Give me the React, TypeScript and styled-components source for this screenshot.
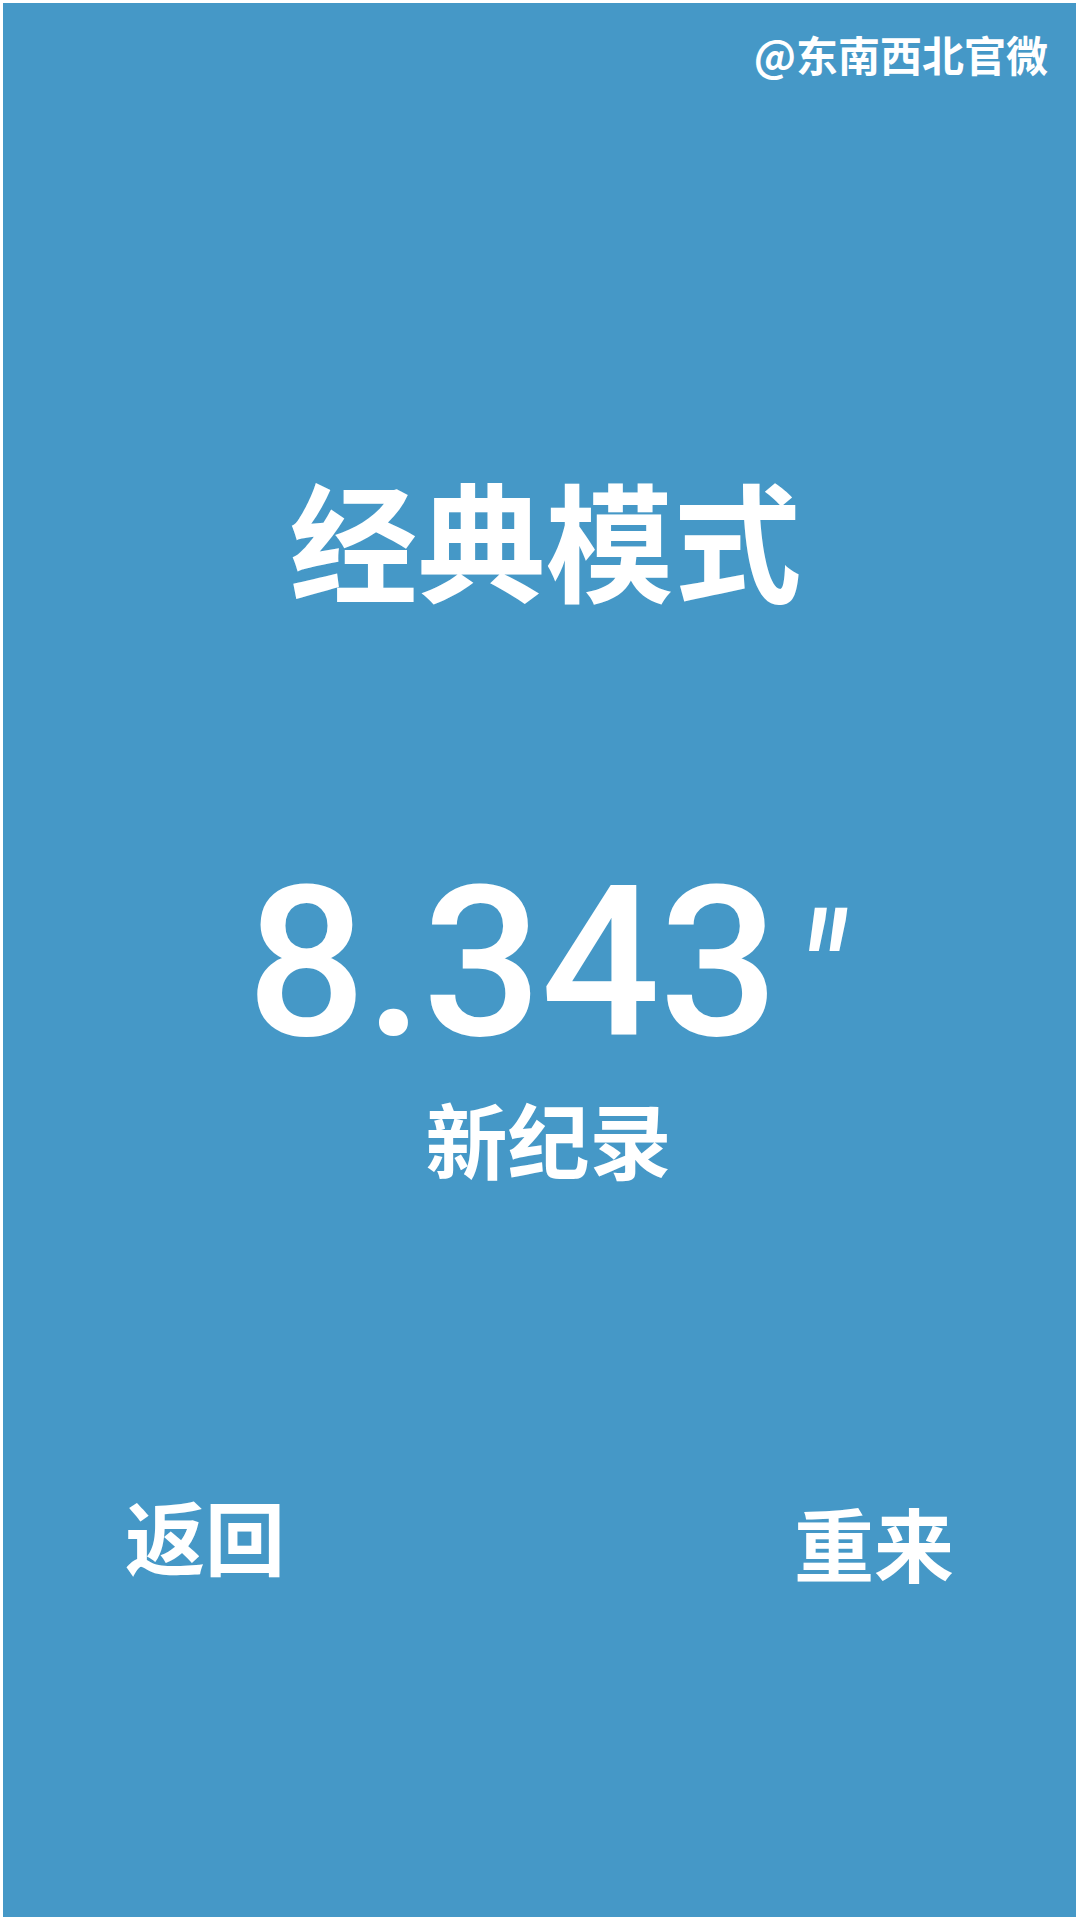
import React from "react";
import styled, { createGlobalStyle } from "styled-components";

const Global = createGlobalStyle`
  html, body { margin: 0; padding: 0; background: #ffffff; }
  body { font-family: "Noto Sans CJK SC", "Noto Sans", sans-serif; }
`;

const Panel = styled.div`
  margin: 3px 4px 3px 3px;
  height: 1914px;
  background: #4598c7;
  display: flex;
  flex-direction: column;
  align-items: center;
  color: #ffffff;
  box-sizing: border-box;
  overflow: hidden;
`;

const cjk = `"Noto Sans CJK SC", "Noto Sans", sans-serif`;

const Watermark = styled.div`
  align-self: flex-end;
  margin: 30px 28px 0 0;
  font-family: ${cjk};
  font-weight: 700;
  font-size: 42px;
  line-height: 1;
`;

const Title = styled.h1`
  margin: 399px 0 0 12px;
  font-family: ${cjk};
  font-weight: 700;
  font-size: 128px;
  line-height: 1;
`;

const ScoreRow = styled.div`
  margin-top: 256px;
  margin-left: 14px;
  display: flex;
  align-items: flex-start;
`;

const Score = styled.span`
  font-family: Roboto, "Liberation Sans", sans-serif;
  font-weight: 500;
  font-size: 210px;
  line-height: 1;
  letter-spacing: -1px;
`;

const Seconds = styled.span`
  font-family: Roboto, "Liberation Sans", sans-serif;
  font-style: italic;
  font-weight: 500;
  font-size: 170px;
  line-height: 1;
  margin: 35px 0 0 16px;
  transform: scaleX(0.85);
`;

const Record = styled.div`
  margin: 29px 0 0 18px;
  font-family: ${cjk};
  font-weight: 700;
  font-size: 82px;
  line-height: 1;
`;

const Actions = styled.div`
  align-self: stretch;
  margin-top: 315px;
  padding: 0 122px;
  display: flex;
  justify-content: space-between;
  align-items: flex-start;
`;

const Action = styled.button<{ $drop?: number }>`
  border: 0;
  background: none;
  padding: 0;
  margin-top: ${(p) => p.$drop ?? 0}px;
  color: #ffffff;
  font-family: ${cjk};
  font-weight: 700;
  font-size: 80px;
  line-height: 1;
  cursor: pointer;
`;

export default function App() {
  return (
    <>
      <Global />
      <Panel>
        <Watermark>@东南西北官微</Watermark>
        <Title>经典模式</Title>
        <ScoreRow>
          <Score>8.343</Score>
          <Seconds>″</Seconds>
        </ScoreRow>
        <Record>新纪录</Record>
        <Actions>
          <Action>返回</Action>
          <Action $drop={7}>重来</Action>
        </Actions>
      </Panel>
    </>
  );
}
